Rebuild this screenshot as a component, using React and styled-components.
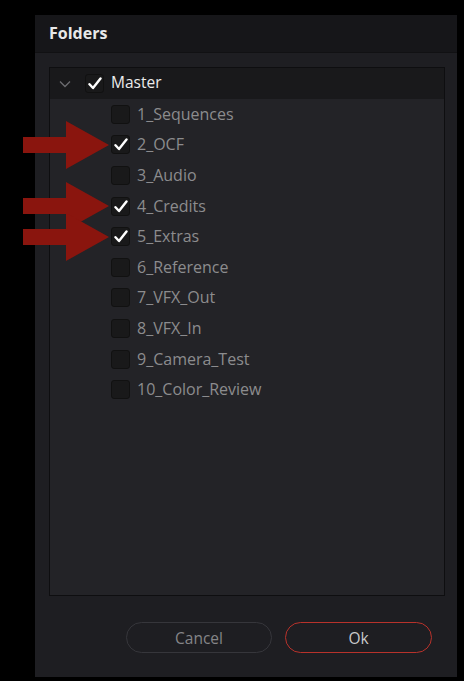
import React from "react";
import styled, { createGlobalStyle } from "styled-components";

const Global = createGlobalStyle`
  html, body { margin: 0; padding: 0; background: #000; }
  body { font-family: "Open Sans", "Noto Sans", sans-serif; }
`;

const Stage = styled.div`
  position: relative;
  width: 464px;
  height: 681px;
  background: #000;
  padding: 15px 7px 4px 35px;
  box-sizing: border-box;
`;

const Dialog = styled.div`
  width: 422px;
  height: 662px;
  background: #1e1e22;
  display: flex;
  flex-direction: column;
`;

const Header = styled.div`
  height: 38px;
  flex: none;
  background: #161619;
  border-bottom: 1px solid #111113;
  box-sizing: border-box;
  display: flex;
  align-items: center;
  padding: 0 0 2px 14px;
  color: #e8e8e8;
  font-weight: 700;
  font-size: 16px;
`;

const Body = styled.div`
  flex: 1;
  display: flex;
  flex-direction: column;
  padding: 14px 12px 25px 14px;
`;

const ListPanel = styled.div`
  height: 529px;
  box-sizing: border-box;
  background: #232327;
  border: 1px solid #0e0e10;
  display: flex;
  flex-direction: column;
`;

const MasterRow = styled.div`
  height: 31px;
  flex: none;
  background: #19191b;
  display: flex;
  align-items: center;
  padding-left: 8px;
`;

const Chevron = styled.div`
  width: 14px;
  height: 14px;
  display: flex;
  align-items: center;
  justify-content: center;
  margin-right: 13px;
`;

const ChildRow = styled.div`
  height: 30.6px;
  display: flex;
  align-items: center;
  padding-left: 61px;
`;

const Box = styled.div`
  width: 19px;
  height: 19px;
  box-sizing: border-box;
  background: #19191a;
  border: 1px solid #111;
  border-radius: 3px;
  display: flex;
  align-items: center;
  justify-content: center;
  flex: none;
`;

const Label = styled.span`
  margin-left: ${(p) => (p.$master ? "7px" : "7px")};
  font-size: ${(p) => (p.$master ? "15.5px" : "16px")};
  color: ${(p) => (p.$master ? "#ececec" : "#8c8c8e")};
  line-height: 1;
  padding-bottom: 1px;
`;

const Footer = styled.div`
  display: flex;
  justify-content: flex-end;
  gap: 13px;
  padding-top: 26px;
  padding-right: 13px;
`;

const Button = styled.button`
  width: ${(p) => (p.$primary ? "147px" : "146px")};
  height: 31px;
  border-radius: 16px;
  background: transparent;
  border: 1.5px solid ${(p) => (p.$primary ? "#b8322b" : "#36363b")};
  color: ${(p) => (p.$primary ? "#c9c9c9" : "#858588")};
  font-family: "Open Sans", "Noto Sans", sans-serif;
  font-size: 15.5px;
  padding: 0;
`;

const Arrow = styled.svg`
  position: absolute;
  left: 23px;
  width: 86px;
  height: 48px;
`;

const Check = () => (
  <svg width="14" height="13" viewBox="0 0 14 13">
    <path
      d="M1.5 7.2 L5 11 L12.5 1.5"
      fill="none"
      stroke="#fff"
      strokeWidth="2.4"
      strokeLinecap="round"
      strokeLinejoin="round"
    />
  </svg>
);

const items = [
  ["1_Sequences", false],
  ["2_OCF", true],
  ["3_Audio", false],
  ["4_Credits", true],
  ["5_Extras", true],
  ["6_Reference", false],
  ["7_VFX_Out", false],
  ["8_VFX_In", false],
  ["9_Camera_Test", false],
  ["10_Color_Review", false],
];

const arrowCenters = [145, 206, 237];

export default function App() {
  return (
    <>
      <Global />
      <Stage>
        <Dialog>
          <Header>Folders</Header>
          <Body>
            <ListPanel>
              <MasterRow>
                <Chevron>
                  <svg width="12" height="8" viewBox="0 0 12 8">
                    <path d="M1 1.5 L6 6.5 L11 1.5" fill="none" stroke="#6c6c70" strokeWidth="1.3" />
                  </svg>
                </Chevron>
                <Box>
                  <Check />
                </Box>
                <Label $master>Master</Label>
              </MasterRow>
              {items.map(([name, checked]) => (
                <ChildRow key={name}>
                  <Box>{checked && <Check />}</Box>
                  <Label>{name}</Label>
                </ChildRow>
              ))}
            </ListPanel>
            <Footer>
              <Button>Cancel</Button>
              <Button $primary>Ok</Button>
            </Footer>
          </Body>
        </Dialog>
        {arrowCenters.map((c) => (
          <Arrow key={c} viewBox="0 0 86 48" style={{ top: c - 24 }}>
            <polygon points="0,16 43,16 43,0 86,24 43,48 43,32 0,32" fill="#8a150e" />
          </Arrow>
        ))}
      </Stage>
    </>
  );
}
